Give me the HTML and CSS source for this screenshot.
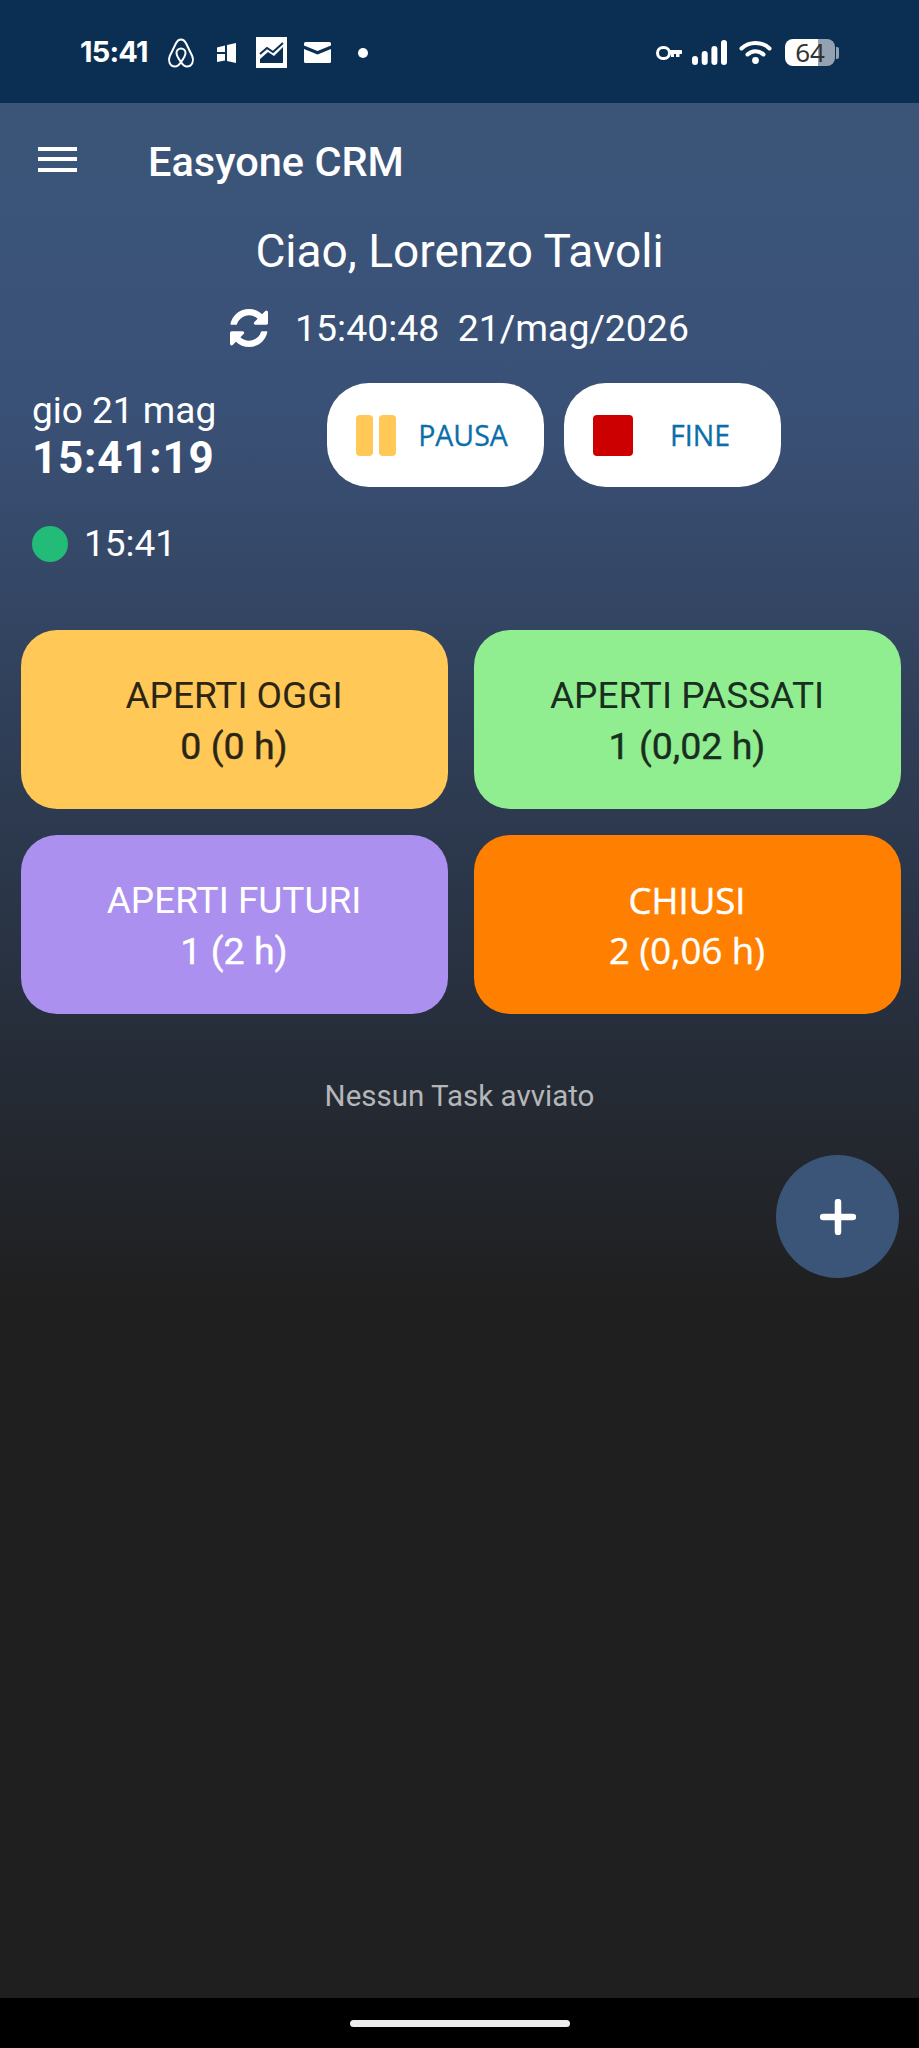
FILE: index.html
```html
<!DOCTYPE html>
<html lang="it">
<head>
<meta charset="utf-8">
<title>Easyone CRM</title>
<link rel="stylesheet" href="styles.css">
</head>
<body>
<div class="screen">
  <header class="status">
    <div class="status-left">
      <span class="clock">15:41</span>
      <svg class="ic-airbnb" viewBox="0 0 28 30"><path d="M14 1.500C11.500 1.500 10 3.200 9 5.200L2.800 18C.8 22.500 2.500 28.500 8 28.500C10.800 28.500 12.800 26 14 24C15.200 26 17.200 28.500 20 28.500C25.500 28.500 27.200 22.500 25.200 18L19 5.200C18 3.200 16.500 1.500 14 1.500Z"/><path d="M14 24C11 20 9.500 17 9.500 15C9.500 12.500 11.500 10.500 14 10.500C16.500 10.500 18.500 12.500 18.500 15C18.500 17 17 20 14 24Z"/></svg>
      <svg class="ic-squares" viewBox="0 0 19 20"><path d="M8 2.500V9H0V4.500ZM8 11V17.500L0 19V11ZM10 2V18L19 20V0Z"/></svg>
      <svg class="ic-chart" viewBox="0 0 31 31"><rect width="31" height="31" fill="#fff"/><path d="M4 26V22L12 15L18 19L27 10V26Z" fill="#0b2f52"/><path d="M4 17L11 11L17 15L27 6" fill="none" stroke="#0b2f52" stroke-width="2"/></svg>
      <svg class="ic-mail" viewBox="0 0 27 21"><path d="M0 1.500Q0 0 1.500 0H25.500Q27 0 27 1.500V3.500L13.500 9L0 3.500ZM0 7L13.500 12.500L27 7V19.500Q27 21 25.500 21H1.500Q0 21 0 19.500Z"/></svg>
      <span class="status-dot"></span>
    </div>
    <div class="status-right">
      <svg class="ic-key" viewBox="0 0 26 14"><rect x="1.500" y="1.500" width="12" height="11" rx="5.500" fill="none" stroke="#fff" stroke-width="3"/><path d="M12 4H25Q26 4 26 5V8H23.500V11H20V8H18V11H15V8H12Z"/></svg>
      <svg class="ic-signal" viewBox="0 0 35 25"><rect x="0" y="16" width="6" height="9" rx="3"/><rect x="9.700" y="11" width="6" height="14" rx="3"/><rect x="19.400" y="6" width="6" height="19" rx="3"/><rect x="29" y="0" width="6" height="25" rx="3"/></svg>
      <svg class="ic-wifi" viewBox="0 0 33 25"><path d="M2.500 9.500C10 2 23 2 30.500 9.500" fill="none" stroke="#fff" stroke-width="4" stroke-linecap="round"/><path d="M8.500 15.500C13 11 20 11 24.500 15.500" fill="none" stroke="#fff" stroke-width="4" stroke-linecap="round"/><circle cx="16.500" cy="21.500" r="3.400"/></svg>
      <div class="battery">
        <div class="battery-body"><span class="battery-text">64</span></div>
        <span class="battery-nub"></span>
      </div>
    </div>
  </header>

  <main class="app">
    <div class="toolbar">
      <button class="menu" aria-label="Menu"><span></span><span></span><span></span></button>
      <h1 class="title">Easyone CRM</h1>
    </div>

    <h2 class="greeting">Ciao, Lorenzo Tavoli</h2>

    <div class="sync">
      <svg class="ic-sync" viewBox="128 128 1536 1536"><path d="M1639 1056q0 5-1 7-64 268-268 434.500t-478 166.500q-146 0-282.500-55t-243.500-157l-129 129q-19 19-45 19t-45-19-19-45v-448q0-26 19-45t45-19h448q26 0 45 19t19 45-19 45l-137 137q71 66 161 102t187 36q134 0 250-65t186-179q11-17 53-117 8-23 30-23h192q13 0 22.500 9.500t9.500 22.500zm25-800v448q0 26-19 45t-45 19h-448q-26 0-45-19t-19-45 19-45l138-138q-148-137-349-137-134 0-250 65t-186 179q-11 17-53 117-8 23-30 23h-199q-13 0-22.500-9.500t-9.500-22.500v-7q65-268 270-434.500t480-166.500q146 0 284 55.500t245 156.500l130-129q19-19 45-19t45 19 19 45z"/></svg>
      <span class="sync-text">15:40:48&nbsp; 21/mag/2026</span>
    </div>

    <div class="shift">
      <div class="shift-time">
        <div class="shift-date">gio 21 mag</div>
        <div class="shift-clock">15:41:19</div>
      </div>
      <div class="shift-actions">
        <button class="action">
          <span class="pause-icon"><i></i><i></i></span>
          <span class="action-label">PAUSA</span>
        </button>
        <button class="action action-stop">
          <span class="stop-icon"></span>
          <span class="action-label">FINE</span>
        </button>
      </div>
    </div>

    <div class="presence"><span class="presence-dot"></span><span>15:41</span></div>

    <section class="cards">
      <div class="card card-today"><div>APERTI OGGI</div><div class="card-value">0 (0 h)</div></div>
      <div class="card card-past"><div>APERTI PASSATI</div><div class="card-value">1 (0,02 h)</div></div>
      <div class="card card-future"><div>APERTI FUTURI</div><div class="card-value">1 (2 h)</div></div>
      <div class="card card-closed"><div>CHIUSI</div><div class="card-value">2 (0,06 h)</div></div>
    </section>

    <p class="empty">Nessun Task avviato</p>

    <button class="fab" aria-label="Aggiungi"><svg viewBox="0 0 36 36"><path d="M18 3V33M3 18H33"/></svg></button>
  </main>

  <footer class="navbar"><span class="home-pill"></span></footer>
</div>
</body>
</html>
```

FILE: styles.css
```css
* { box-sizing: border-box; }
html, body { margin: 0; padding: 0; }
body { font-family: Roboto, "Noto Sans", sans-serif; background: #1f1f1f; color: #fff; }
button { border: 0; padding: 0; font: inherit; background: none; color: inherit; }
h1, h2, p { margin: 0; font-weight: 400; }

.screen { width: 919px; height: 2048px; display: flex; flex-direction: column; overflow: hidden; }

/* status bar */
.status { height: 103px; flex: none; background: #0b2f52; display: flex; justify-content: space-between; align-items: flex-start; padding: 37px 80px 0 80px; fill: #fff; }
.status-left, .status-right { display: flex; align-items: center; height: 31px; }
.clock { font-size: 29px; line-height: 29px; font-weight: 700; font-family: Inter, Roboto, sans-serif; letter-spacing: -0.8px; width: 87px; margin-bottom: 2px; }
.ic-airbnb { width: 28px; height: 30px; fill: none; stroke: #fff; stroke-width: 2; }
.ic-squares { width: 19px; height: 20px; margin-left: 22px; }
.ic-chart { width: 31px; height: 31px; margin-left: 20px; }
.ic-mail { width: 27px; height: 21px; margin-left: 17px; }
.status-dot { width: 10px; height: 10px; border-radius: 50%; background: #fff; margin-left: 27px; }
.ic-key { width: 26px; height: 14px; }
.ic-signal { width: 35px; height: 25px; margin-left: 10px; }
.ic-wifi { width: 33px; height: 25px; margin: 0 0 2px 12px; }
.battery { display: flex; align-items: center; margin-left: 13px; }
.battery-body { width: 50px; height: 27px; border-radius: 8px; background: linear-gradient(90deg, #fff 33px, #93a1b1 33px); display: flex; align-items: center; justify-content: center; }
.battery-text { color: #333; font-size: 26px; font-family: "Noto Sans", sans-serif; line-height: 27px; }
.battery-nub { width: 3px; height: 12px; margin-left: 1px; border-radius: 0 2px 2px 0; background: #93a1b1; }

/* app area */
.app { position: relative; flex: 1; background: linear-gradient(#3b5579 0, #3a5177 300px, #2a3547 800px, #1f1f1f 1200px); }

.toolbar { height: 116px; display: flex; align-items: center; }
.menu { width: 39px; height: 25px; margin: 0 0 4px 38px; display: flex; flex-direction: column; justify-content: space-between; }
.menu span { display: block; height: 4px; background: #fff; }
.title { margin-left: 71px; font-size: 41.500px; font-weight: 500; }

.greeting { text-align: center; font-size: 46px; line-height: 50px; margin-top: 7px; }

.sync { display: flex; justify-content: center; align-items: center; gap: 27px; margin-top: 32px; height: 40px; }
.ic-sync { width: 38px; height: 38px; fill: #fff; }
.sync-text { font-size: 37.400px; }

.shift { display: flex; align-items: flex-start; margin-top: 35px; }
.shift-time { width: 327px; padding-left: 32px; padding-top: 5px; }
.shift-date { font-size: 37px; line-height: 45px; }
.shift-clock { font-size: 44px; font-weight: 700; line-height: 50px; letter-spacing: 0.800px; }
.shift-actions { display: flex; gap: 20px; }
.action { width: 217px; height: 104px; border-radius: 42px; background: #fff; display: flex; align-items: center; padding-left: 29px; }
.action-label { font-family: "Open Sans", "Noto Sans", sans-serif; font-size: 28.500px; color: #0a6ea8; flex: 1; text-align: center; padding-right: 14px; -webkit-text-stroke: 0.3px #0a6ea8; }
.pause-icon { display: flex; gap: 6px; width: 40px; height: 41px; flex: none; }
.pause-icon i { flex: 1; background: #ffc857; border-radius: 4px; }
.stop-icon { width: 40px; height: 41px; flex: none; border-radius: 4px; background: #cc0000; }

.presence { display: flex; align-items: center; gap: 16px; margin: 37px 0 0 32px; font-size: 37px; line-height: 40px; }
.presence-dot { width: 36px; height: 36px; border-radius: 50%; background: #22bb77; }

.cards { display: grid; grid-template-columns: 427px 427px; grid-auto-rows: 179px; gap: 26px; margin: 66px 0 0 20.500px; width: 880px; }
.card { border-radius: 36px; display: flex; flex-direction: column; align-items: center; justify-content: center; font-size: 37px; line-height: 50px; padding-top: 3px; }
.card-value { font-size: 37.500px; -webkit-text-stroke: 0.4px currentColor; }
.card-today { background: #ffc857; color: #2b2516; }
.card-past { background: #90ee90; color: #1a2e1f; }
.card-future { background: #ab90f0; color: #fff; }
.card-closed { background: #ff8000; color: #fff; font-family: "Open Sans", "Noto Sans", sans-serif; font-size: 36.500px; padding-top: 0; -webkit-text-stroke: 0.5px currentColor; }
.card-closed .card-value { font-size: 36.500px; }

.empty { text-align: center; font-size: 29.500px; line-height: 34px; color: #b4b6ba; margin-top: 65px; }

.fab { position: absolute; left: 776px; top: 1052px; width: 123px; height: 123px; border-radius: 50%; background: #3b5579; display: flex; align-items: center; justify-content: center; }
.fab svg { width: 36px; height: 36px; fill: none; stroke: #fff; stroke-width: 6.500; stroke-linecap: round; }

/* navigation */
.navbar { height: 50px; flex: none; background: #000; display: flex; justify-content: center; padding-top: 22px; }
.home-pill { width: 220px; height: 7px; border-radius: 4px; background: #eee; }
```
